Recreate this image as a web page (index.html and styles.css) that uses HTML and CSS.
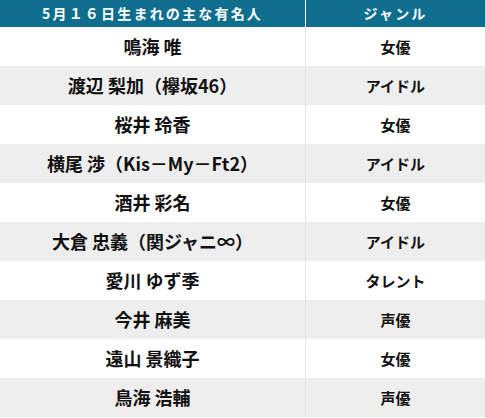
FILE: index.html
```html
<!DOCTYPE html>
<html lang="ja">
<head>
<meta charset="utf-8">
<link rel="stylesheet" href="styles.css">
</head>
<body>
<table class="celebs">
  <thead>
    <tr>
      <th class="col-name">5月１６日生まれの主な有名人</th>
      <th class="col-genre">ジャンル</th>
    </tr>
  </thead>
  <tbody>
    <tr><td class="name">鳴海 唯</td><td class="genre">女優</td></tr>
    <tr><td class="name">渡辺 梨加（欅坂46）</td><td class="genre">アイドル</td></tr>
    <tr><td class="name">桜井 玲香</td><td class="genre">女優</td></tr>
    <tr><td class="name">横尾 渉（Kis－My－Ft2）</td><td class="genre">アイドル</td></tr>
    <tr><td class="name">酒井 彩名</td><td class="genre">女優</td></tr>
    <tr><td class="name">大倉 忠義（関ジャニ∞）</td><td class="genre">アイドル</td></tr>
    <tr><td class="name">愛川 ゆず季</td><td class="genre">タレント</td></tr>
    <tr><td class="name">今井 麻美</td><td class="genre">声優</td></tr>
    <tr><td class="name">遠山 景織子</td><td class="genre">女優</td></tr>
    <tr><td class="name">鳥海 浩輔</td><td class="genre">声優</td></tr>
  </tbody>
</table>
</body>
</html>
```
FILE: styles.css
```css
html, body {
  margin: 0;
  padding: 0;
  background: #ffffff;
}

body {
  font-family: "Noto Sans CJK JP", "Noto Sans", sans-serif;
  color: #111111;
}

.celebs {
  width: 485px;
  border-collapse: collapse;
  table-layout: fixed;
}

.celebs th {
  background: #0f6e8e;
  color: #ffffff;
  font-size: 14px;
  font-weight: 700;
  letter-spacing: 2.2px;
  height: 27px;
  padding: 0;
  line-height: 27px;
  text-align: center;
}

.celebs th.col-name {
  width: 305px;
  border-right: 1px solid #ffffff;
}

.celebs td {
  height: 39px;
  padding: 0;
  text-align: center;
  font-weight: 700;
  line-height: 39px;
  box-sizing: border-box;
}

.celebs td.name {
  font-size: 18px;
  border-right: 1px solid #e2e2e2;
}

.celebs td.genre {
  font-size: 15px;
}

.celebs tbody tr:nth-child(even) td {
  background: #eeeeee;
}
```
